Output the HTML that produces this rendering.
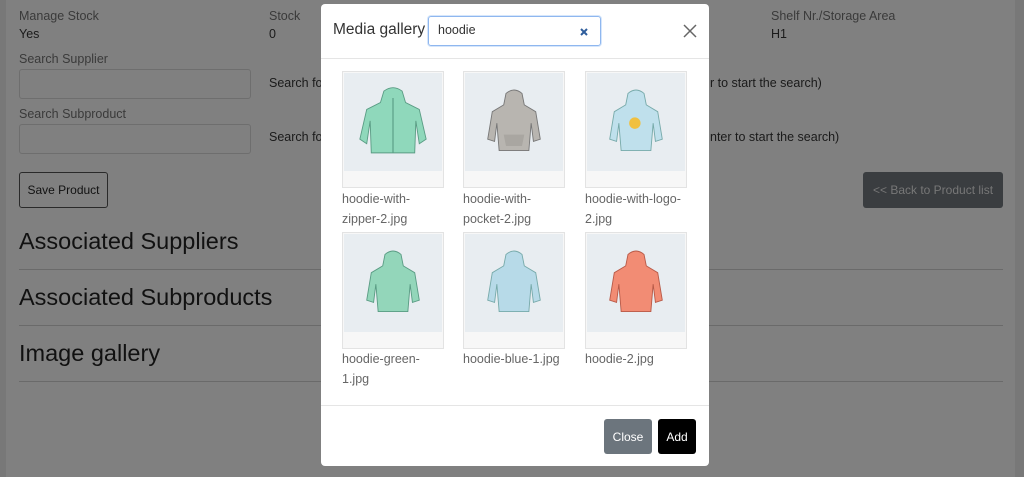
<!DOCTYPE html>
<html><head><style>
*{box-sizing:border-box}
body{margin:0;width:1024px;height:477px;overflow:hidden;background:#787878;font-family:"Liberation Sans",sans-serif;position:relative}
.page{position:absolute;left:6px;top:0;width:1009px;height:477px;background:#808080;color:#1a1a1a}
.t{position:absolute;font-size:12.5px;white-space:nowrap}
.lbl{color:#3a3a3a}
.inp{position:absolute;width:232px;height:30px;border:1px solid #6e6e6e;border-radius:3px;background:#808080}
.btn{position:absolute;font-size:12px;border-radius:3px;display:flex;align-items:center;justify-content:center;white-space:nowrap}
h2{position:absolute;margin:0;font-weight:normal;font-size:23.5px;color:#111;left:13px}
.hr{position:absolute;left:13px;width:984px;height:1px;background:#6a6a6a}
.modal{position:absolute;left:321px;top:4px;width:388px;height:462px;background:#fff;border-radius:4px}
.thumb{position:absolute;width:102px;height:117px;border:1px solid #e3e3e3;background:#f7f7f7}
.thumb .im{position:absolute;left:1px;top:1px;width:98px;height:98px;background:#e8edf1;display:flex;align-items:center;justify-content:center}
.cap{position:absolute;font-size:12.5px;color:#666;line-height:20px;width:110px}
</style></head><body>
<div class="page">
<div class="t lbl" style="left:13px;top:9px">Manage Stock</div>
<div class="t" style="left:13px;top:27px">Yes</div>
<div class="t lbl" style="left:263px;top:9px">Stock</div>
<div class="t" style="left:263px;top:27px">0</div>
<div class="t lbl" style="left:765px;top:9px">Shelf Nr./Storage Area</div>
<div class="t" style="left:765px;top:27px">H1</div>
<div class="t lbl" style="left:13px;top:52px">Search Supplier</div>
<div class="inp" style="left:13px;top:69px"></div>
<div class="t" style="left:263px;top:76px">Search fo</div>
<div class="t" style="left:704px;top:76px">r to start the search)</div>
<div class="t lbl" style="left:13px;top:107px">Search Subproduct</div>
<div class="inp" style="left:13px;top:124px"></div>
<div class="t" style="left:263px;top:130px">Search fo</div>
<div class="t" style="left:704px;top:130px">nter to start the search)</div>
<div class="btn" style="left:13px;top:172px;width:89px;height:36px;border:1px solid #2a2a2a;color:#111">Save Product</div>
<div class="btn" style="left:857px;top:172px;width:140px;height:36px;background:#3a3d40;color:#777">&lt;&lt; Back to Product list</div>
<h2 style="top:228px">Associated Suppliers</h2>
<div class="hr" style="top:269px"></div>
<h2 style="top:284px">Associated Subproducts</h2>
<div class="hr" style="top:325px"></div>
<h2 style="top:340px">Image gallery</h2>
<div class="hr" style="top:381px"></div>
</div>

<div class="modal">
<div style="position:absolute;left:12px;top:17px;font-size:15.5px;color:#333">Media gallery</div>
<div style="position:absolute;left:107px;top:12px;width:173px;height:30px;border:1px solid #8fb7ef;border-radius:3px;box-shadow:0 0 0 1px #d6e6fb"></div>
<div style="position:absolute;left:117px;top:19px;font-size:12.5px;color:#333">hoodie</div>
<svg style="position:absolute;left:259px;top:24px" width="8" height="8"><path d="M1 1L7 7M7 1L1 7" stroke="#2f5d9c" stroke-width="2"/></svg>
<svg style="position:absolute;left:362px;top:20px" width="14" height="14"><path d="M1 1L13 13M13 1L1 13" stroke="#666" stroke-width="1.5"/></svg>
<div style="position:absolute;left:0;top:54px;width:388px;height:1px;background:#e5e5e5"></div>

<div class="thumb" style="left:21px;top:67px"><div class="im"><svg width="80" height="80" viewBox="0 0 70 70"><path d="M27 8Q35 2 43 8L46 18 58 24 64 50 58 54 55 34 54 62 16 62 15 34 12 54 6 50 12 24 24 18Z" fill="#8fd8bb" stroke="#5a9c84" stroke-width=".8"/><path d="M35 14V62" stroke="#5a9c84"/></svg></div></div>
<div class="cap" style="left:21px;top:185px">hoodie-with-<br>zipper-2.jpg</div>
<div class="thumb" style="left:142px;top:67px"><div class="im"><svg width="80" height="80" viewBox="0 0 70 70"><path d="M28 10Q35 4 42 10L44 20 54 26 58 50 52 52 50 36 48 60 22 60 20 36 18 52 12 50 16 26 26 20Z" fill="#b8b5b0" stroke="#777" stroke-width=".8"/><path d="M26 46H44L42 56H28Z" fill="#a9a6a1"/></svg></div></div>
<div class="cap" style="left:142px;top:185px">hoodie-with-<br>pocket-2.jpg</div>
<div class="thumb" style="left:264px;top:67px"><div class="im"><svg width="80" height="80" viewBox="0 0 70 70"><path d="M28 10Q35 4 42 10L44 20 54 26 58 50 52 52 50 36 48 60 22 60 20 36 18 52 12 50 16 26 26 20Z" fill="#bfe0ec" stroke="#7aa" stroke-width=".8"/><circle cx="34" cy="36" r="5" fill="#f0c040"/></svg></div></div>
<div class="cap" style="left:264px;top:185px">hoodie-with-logo-<br>2.jpg</div>

<div class="thumb" style="left:21px;top:228px"><div class="im"><svg width="80" height="80" viewBox="0 0 70 70"><path d="M28 10Q35 4 42 10L44 20 54 26 58 50 52 52 50 36 48 60 22 60 20 36 18 52 12 50 16 26 26 20Z" fill="#93d6ba" stroke="#5a9c84" stroke-width=".8"/></svg></div></div>
<div class="cap" style="left:21px;top:345px">hoodie-green-<br>1.jpg</div>
<div class="thumb" style="left:142px;top:228px"><div class="im"><svg width="80" height="80" viewBox="0 0 70 70"><path d="M28 10Q35 4 42 10L44 20 54 26 58 50 52 52 50 36 48 60 22 60 20 36 18 52 12 50 16 26 26 20Z" fill="#b7dae8" stroke="#7aa" stroke-width=".8"/></svg></div></div>
<div class="cap" style="left:142px;top:345px">hoodie-blue-1.jpg</div>
<div class="thumb" style="left:264px;top:228px"><div class="im"><svg width="80" height="80" viewBox="0 0 70 70"><path d="M28 10Q35 4 42 10L44 20 54 26 58 50 52 52 50 36 48 60 22 60 20 36 18 52 12 50 16 26 26 20Z" fill="#f28c74" stroke="#b85a48" stroke-width=".8"/></svg></div></div>
<div class="cap" style="left:264px;top:345px">hoodie-2.jpg</div>

<div style="position:absolute;left:0;top:401px;width:388px;height:1px;background:#e5e5e5"></div>
<div class="btn" style="left:283px;top:415px;width:48px;height:35px;background:#6c757d;color:#fff">Close</div>
<div class="btn" style="left:337px;top:415px;width:38px;height:35px;background:#000;color:#fff">Add</div>
</div>
</body></html>
